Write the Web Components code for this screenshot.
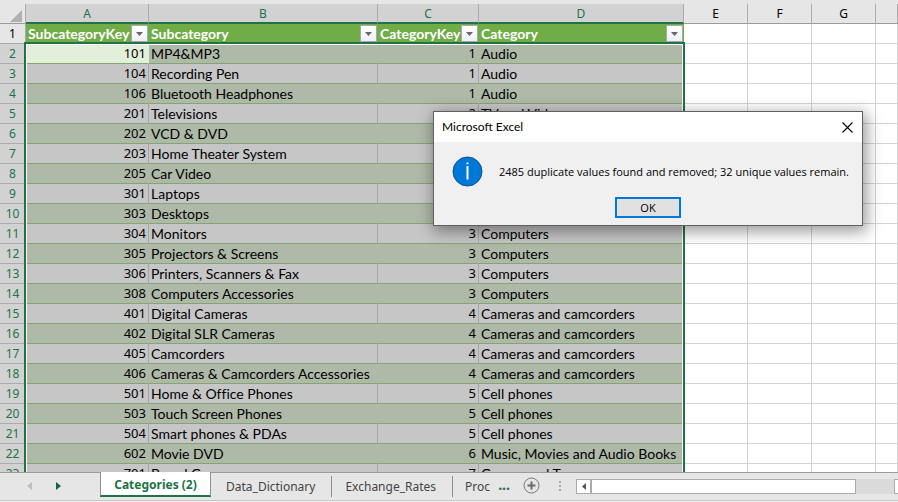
<!DOCTYPE html>
<html lang="en">
<head>
<meta charset="utf-8">
<title>Categories (2)</title>
<style>
html, body { height: 100%; margin: 0; }
body { background: #e6e6e6; overflow: hidden; font-family: Lato, "Noto Sans", sans-serif; color: #000; }
</style>
</head>
<body>
<excel-window>
  <sheet-grid></sheet-grid>
  <message-box slot="dialog" heading="Microsoft Excel">2485 duplicate values found and removed; 32 unique values remain.</message-box>
  <sheet-tabs slot="footer">
    <sheet-tab active>Categories (2)</sheet-tab>
    <sheet-tab>Data_Dictionary</sheet-tab>
    <sheet-tab>Exchange_Rates</sheet-tab>
    <sheet-tab last>Proc</sheet-tab>
  </sheet-tabs>
</excel-window>
<script>
const root = (el, html) => { const r = el.attachShadow({ mode: 'open' }); r.innerHTML = html; return r; };

class ExcelWindow extends HTMLElement {
  constructor() {
    super();
    root(this, `<style>
      :host { display: flex; flex-direction: column; height: 100vh; position: relative; overflow: hidden; }
      main { flex: 1; min-height: 0; overflow: hidden; padding-top: 4px; }
      ::slotted([slot=dialog]) { position: absolute; left: 433px; top: 111px; }
    </style><main><slot></slot></main><slot name="footer"></slot><slot name="dialog"></slot>`);
  }
}

class FilterButton extends HTMLElement {
  constructor() {
    super();
    root(this, `<style>
      :host { display: block; flex: none; }
      button { display: flex; align-items: center; justify-content: center; width: 17px; height: 17px; padding: 0; border: 1px solid #a3a6b5; background: linear-gradient(#fff, #eef0f6); }
    </style><button type="button" aria-label="Filter"><svg width="7" height="4" viewBox="0 0 7 4"><path d="M0 0h7L3.5 4z" fill="#666"/></svg></button>`);
  }
}

const ROWS = [
  [101, 'MP4&MP3', 1, 'Audio'], [104, 'Recording Pen', 1, 'Audio'], [106, 'Bluetooth Headphones', 1, 'Audio'],
  [201, 'Televisions', 2, 'TV and Video'], [202, 'VCD & DVD', 2, 'TV and Video'], [203, 'Home Theater System', 2, 'TV and Video'],
  [205, 'Car Video', 2, 'TV and Video'], [301, 'Laptops', 3, 'Computers'], [303, 'Desktops', 3, 'Computers'],
  [304, 'Monitors', 3, 'Computers'], [305, 'Projectors & Screens', 3, 'Computers'], [306, 'Printers, Scanners & Fax', 3, 'Computers'],
  [308, 'Computers Accessories', 3, 'Computers'], [401, 'Digital Cameras', 4, 'Cameras and camcorders'],
  [402, 'Digital SLR Cameras', 4, 'Cameras and camcorders'], [405, 'Camcorders', 4, 'Cameras and camcorders'],
  [406, 'Cameras & Camcorders Accessories', 4, 'Cameras and camcorders'], [501, 'Home & Office Phones', 5, 'Cell phones'],
  [503, 'Touch Screen Phones', 5, 'Cell phones'], [504, 'Smart phones & PDAs', 5, 'Cell phones'],
  [602, 'Movie DVD', 6, 'Music, Movies and Audio Books'], [701, 'Board Games', 7, 'Games and Toys']
];
const esc = s => String(s).replace(/&/g, '&amp;');

class SheetGrid extends HTMLElement {
  constructor() {
    super();
    const blanks = '<td></td>'.repeat(4);
    const body = ROWS.map((r, i) => `<tr class="sel ${i % 2 ? 'plain' : 'band'}"><th scope="row">${i + 2}</th>` +
      r.map((v, c) => `<td class="${c % 2 ? '' : 'num'}${i + c ? '' : ' active'}">${esc(v)}</td>`).join('') + blanks + '</tr>').join('');
    root(this, `<style>
      :host { display: block; position: relative; }
      table { width: 100%; table-layout: fixed; border-collapse: separate; border-spacing: 0; font-size: 14px; line-height: 19px; font-variant-ligatures: none; background: #fff; }
      tr { height: 20px; }
      th, td { box-sizing: border-box; height: 20px; padding: 0 2px; border: 0 solid #d4d4d4; border-width: 0 1px 1px 0; white-space: nowrap; overflow: hidden; text-align: left; }
      thead th { padding: 1px 0 0; background: #e6e6e6; border-color: #ababab; border-bottom-color: #9b9b9b; text-align: center; font: 12px/18px "Noto Sans", sans-serif; }
      thead th.on { padding-top: 2px; background: #d2d2d2; color: #217346; border-bottom: 2px solid #217346; line-height: 16px; }
      thead th.corner { padding: 0; }
      tbody th { padding: 0; background: #e6e6e6; border-color: #ababab; text-align: center; font: 12px/19px "Noto Sans", sans-serif; }
      .sel th { background: #d2d2d2; color: #217346; }
      .corner svg { display: block; margin: 4px 0 0 10px; }
      .field { padding: 0 1px 0 2px; background: #70ad47; border-color: #70ad47; color: #fff; font-weight: 700; }
      .field div { display: flex; align-items: center; justify-content: space-between; height: 19px; }
      .field div filter-button { margin-right: -1px; }
      .num { text-align: right; font: 13px/19px "Noto Sans", sans-serif; }
      .sel td:nth-child(-n+5) { border-bottom-color: #83a56f; }
      .band td:nth-child(-n+5) { background: #aeb9a7; border-right-color: #aeb9a7; }
      .plain td:nth-child(-n+5) { background: #c6c6c6; border-right-color: #a6a6a6; }
      .sel td.active:nth-child(2) { background: #e2efda; border-right-color: #e2efda; }
      .outline { position: absolute; left: 24px; top: 38px; width: 661px; height: 100%; box-sizing: border-box; border: 2px solid #217346; box-shadow: inset 0 0 0 1px #fff; pointer-events: none; }
    </style>
    <table>
      <colgroup><col style="width:26px"><col style="width:123px"><col style="width:229px"><col style="width:101px"><col style="width:205px"><col style="width:64px"><col style="width:64px"><col style="width:64px"><col></colgroup>
      <thead><tr><th class="corner"><svg width="12" height="12" viewBox="0 0 12 12"><path d="M12 0v12H0z" fill="#b1b1b1"/></svg></th>
        <th class="on">A</th><th class="on">B</th><th class="on">C</th><th class="on">D</th><th>E</th><th>F</th><th>G</th><th></th></tr></thead>
      <tbody><tr><th scope="row">1</th>${['SubcategoryKey', 'Subcategory', 'CategoryKey', 'Category'].map(n => `<td class="field"><div><span>${n}</span><filter-button></filter-button></div></td>`).join('')}${blanks}</tr>${body}</tbody>
    </table><div class="outline"></div>`);
  }
}

class MessageBox extends HTMLElement {
  constructor() {
    super();
    root(this, `<style>
      :host { display: block; box-sizing: border-box; width: 430px; border: 1px solid #5f5f5f; background: #f0f0f0; box-shadow: 2px 4px 14px 2px rgba(0,0,0,.38); font: 11px/16px "Open Sans", sans-serif; }
      header { display: flex; align-items: center; justify-content: space-between; height: 30px; padding: 0 9px 0 8px; background: #fff; font: 12px/16px Lato, sans-serif; }
      button { padding: 0; font: inherit; color: inherit; }
      .close { display: flex; border: 0; background: none; }
      .body { display: flex; align-items: center; gap: 16px; padding: 14px 14px 0 18px; }
      .body svg { flex: none; }
      p { margin: 0; white-space: nowrap; }
      footer { display: flex; justify-content: center; padding: 10px 0 7px; }
      .ok { width: 66px; height: 21px; border: 2px solid #0078d7; background: #e1e1e1; line-height: 16px; }
    </style>
    <header><span id="h"></span><button class="close" type="button" aria-label="Close"><svg width="11" height="11" viewBox="0 0 11 11"><path d="M.5.5l10 10M10.5.5l-10 10" stroke="#000" stroke-width="1.1"/></svg></button></header>
    <div class="body"><svg width="31" height="31" viewBox="0 0 31 31"><circle cx="15.5" cy="15.5" r="14.5" fill="#0078d7" stroke="#0b5394"/><path d="M14.5 6.5h2v2h-2zM14.5 9.500h2v14h-2z" fill="#fff"/><path d="M14 8.500h3v1.500h-3z" fill="#0078d7"/></svg><p><slot></slot></p></div>
    <footer><button class="ok" type="button">OK</button></footer>`);
  }
  connectedCallback() {
    this.setAttribute('role', 'dialog');
    this.shadowRoot.getElementById('h').textContent = this.getAttribute('heading');
  }
}

class SheetTab extends HTMLElement {
  constructor() {
    super();
    root(this, `<style>
      :host { display: flex; align-items: center; flex: none; padding-top: 3px; box-sizing: border-box; height: 24px; }
      button { height: 21px; padding: 0 16px 0 13px; border: 0; border-right: 1px solid #8f8f8f; background: none; color: #444; font: 12px/18px "Noto Sans", sans-serif; white-space: nowrap; }
      :host([active]) { margin-top: -1px; height: 25px; padding: 0; margin-right: 2px; }
      :host([active]) button { width: 111px; height: 25px; padding: 3px 0 0; border: 0 solid #8f8f8f; border-width: 0 1px 2px; border-bottom-color: #217346; background: #fff; color: #217346; font-weight: 700; }
      :host([last]) button { padding: 0 7px 0 12px; border: 0; }
    </style><button type="button"><slot></slot></button>`);
  }
}

class SheetTabs extends HTMLElement {
  constructor() {
    super();
    root(this, `<style>
      :host { display: flex; align-items: flex-start; flex: none; box-sizing: border-box; height: 30px; border-top: 1px solid #9b9b9b; border-bottom: 1px solid #f1f1f1; background: #e6e6e6; box-shadow: inset 0 -1px #c6c6c6; }
      button { display: flex; align-items: center; justify-content: center; box-sizing: border-box; padding: 0; border: 0; background: none; }
      nav { display: flex; gap: 24px; width: 73px; padding-left: 27px; }
      nav button { width: 5px; height: 25px; }
      .more { width: 14px; height: 24px; color: #217346; font: 700 14px/16px "Noto Sans", sans-serif; }
      .add { width: 18px; height: 25px; margin-left: 11px; }
      .dots { display: flex; flex-direction: column; gap: 2px; margin: 8px 15px 0 19px; }
      .dots i { width: 2px; height: 2px; background: #a9a9a9; }
      .scroll { display: flex; flex: 1; min-width: 0; overflow: hidden; height: 15px; margin-top: 6px; background: #dadada; }
      .scroll button { flex: none; width: 15px; height: 15px; border: 1px solid #ababab; background: #fff; }
      .thumb { flex: 1; border: 1px solid #ababab; background: #fff; margin-right: 38px; }
      .scroll .end { margin-right: -11px; }
    </style>
    <nav><button type="button" aria-label="Previous sheet"><svg width="5" height="8" viewBox="0 0 5 8"><path d="M5 0v8L0 4z" fill="#bdbdbd"/></svg></button>
    <button type="button" aria-label="Next sheet"><svg width="5" height="8" viewBox="0 0 5 8"><path d="M0 0v8l5-4z" fill="#0d6b38"/></svg></button></nav>
    <slot></slot>
    <button class="more" type="button" aria-label="More sheets">...</button>
    <button class="add" type="button" aria-label="New sheet"><svg width="17" height="17" viewBox="0 0 17 17" fill="none"><circle cx="8.5" cy="8.5" r="7.5" stroke="#777"/><path d="M8.5 4.5v8M4.5 8.5h8" stroke="#6a6a6a" stroke-width="2"/></svg></button>
    <span class="dots"><i></i><i></i><i></i></span>
    <div class="scroll"><button type="button" aria-label="Scroll left"><svg width="4" height="7" viewBox="0 0 4 7"><path d="M4 0v7L0 3.500z" fill="#555"/></svg></button><div class="thumb"></div><button class="end" type="button" aria-label="Scroll right"></button></div>`);
  }
}

customElements.define('filter-button', FilterButton);
customElements.define('sheet-grid', SheetGrid);
customElements.define('message-box', MessageBox);
customElements.define('sheet-tab', SheetTab);
customElements.define('sheet-tabs', SheetTabs);
customElements.define('excel-window', ExcelWindow);
</script>
</body>
</html>
